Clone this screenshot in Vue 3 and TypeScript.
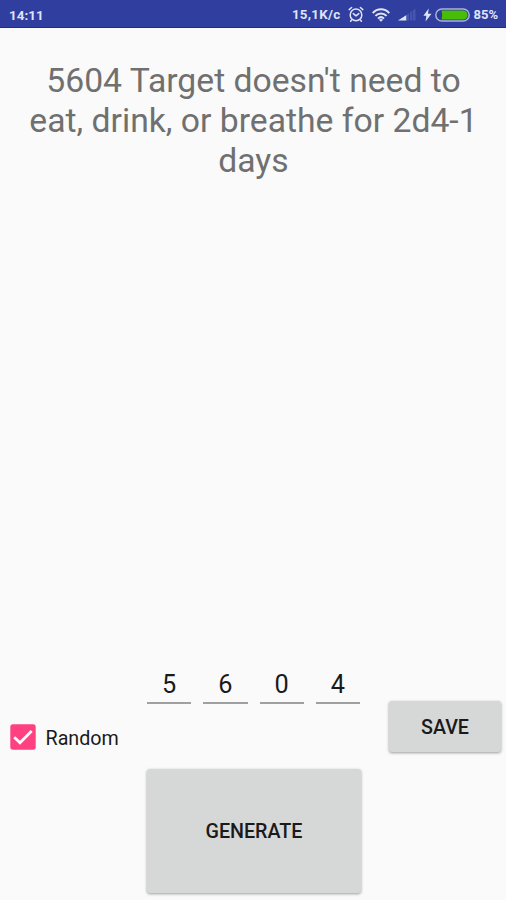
<script setup lang="ts">
import { computed, ref } from 'vue'

const effect = ref<string>("Target doesn't need to eat, drink, or breathe for 2d4-1 days")
const digits = ref<string[]>(['5', '6', '0', '4'])
const random = ref<boolean>(true)

const result = computed<string>(() => `${digits.value.join('')} ${effect.value}`)

function generate(): void {
  if (random.value) {
    digits.value = digits.value.map(() => String(Math.floor(Math.random() * 10)))
  }
}
</script>

<template>
  <div class="screen">
    <header class="status">
      <span class="clock">14:11</span>
      <span class="speed">15,1K/c</span>
      <svg class="alarm" width="16" height="17" viewBox="0 0 16 17" fill="none" stroke="currentColor" stroke-width="1.5" stroke-linecap="round" stroke-linejoin="round">
        <circle cx="8" cy="8.9" r="5.8" />
        <path d="M1.2 3.6 3.6 1.5M14.8 3.6 12.4 1.5M5.3 7.6 8 9.8 10.8 7.6M3.6 14l-1 1.3M12.4 14l1 1.3" />
      </svg>
      <svg class="wifi" width="18" height="14" viewBox="0 0 18 14" fill="none" stroke="currentColor" stroke-width="2">
        <path d="M.7 5.1C5.4.1 12.6.1 17.3 5.1M3.4 7.9c3.2-3.3 8-3.3 11.2 0M6 10.6c1.8-1.8 4.2-1.8 6 0" />
        <path d="M9 13.8 6.9 11.8c1.2-1 3-1 4.2 0Z" fill="currentColor" stroke="none" />
      </svg>
      <svg class="signal" width="18" height="13" viewBox="0 0 18 13">
        <path d="M0 12.5 8.5 7V12.5Z" fill="#dfe4f8" />
        <path d="M8.5 7 11 5.2V12.5H8.5ZM12 4.5l2.3-1.7v9.7H12ZM15 2.3 17.5.5v12H15Z" fill="#4655b0" />
      </svg>
      <svg class="bolt" width="9" height="14" viewBox="0 0 9 14">
        <path d="M5.7.5.4 7.7h3L2.5 13.5 8.5 5.8H5Z" fill="currentColor" />
      </svg>
      <svg class="battery" width="35" height="14" viewBox="0 0 35 14">
        <rect x=".8" y=".9" width="33.4" height="12.2" rx="6.1" fill="#2b3a94" stroke="#a9b2dc" stroke-width="1.5" />
        <path d="M6.5 2.4H28a4.6 4.6 0 0 1 0 9.2H6.5Q8 7 6.5 2.4Z" fill="#48bd08" />
      </svg>
      <span class="percent">85%</span>
    </header>

    <main class="content">
      <p class="result">{{ result }}</p>

      <section class="controls">
        <label class="random">
          <input v-model="random" class="native" type="checkbox" />
          <svg class="box" width="26" height="26" viewBox="0 0 26 26">
            <rect x=".3" y=".3" width="25.4" height="25.4" rx="2.6" :fill="random ? '#ff4081' : '#757575'" />
            <path v-if="random" d="M4.2 13.2 10 18.8 21.7 7" fill="none" stroke="#fafafa" stroke-width="2.8" />
          </svg>
          <span>Random</span>
        </label>

        <div class="middle">
          <div class="digits">
            <input v-for="(_, i) in digits" :key="i" v-model="digits[i]" class="digit" type="text" maxlength="1" />
          </div>
          <button class="button generate" type="button" @click="generate">GENERATE</button>
        </div>

        <button class="button save" type="button">SAVE</button>
      </section>
    </main>
  </div>
</template>

<style>
body {
  background: #fafafa;
}
</style>

<style scoped>
.screen {
  display: flex;
  flex-direction: column;
  width: 506px;
  height: 900px;
  overflow: hidden;
  box-sizing: border-box;
  background: #fafafa;
  color: #1a1a1a;
  font-family: Roboto, sans-serif;
}

.status {
  display: flex;
  align-items: center;
  flex: none;
  height: 28px;
  padding: 2px 8px 0 9px;
  box-sizing: border-box;
  border-bottom: 1px solid #1e2b94;
  background: #303f9f;
  color: #dfe4f8;
  font-size: 13px;
  font-weight: 700;
  white-space: nowrap;
}

.clock {
  margin-right: auto;
  font-size: 13.5px;
}

.speed {
  font-size: 13.3px;
  letter-spacing: 0.3px;
}

.alarm,
.wifi,
.signal {
  margin-left: 8px;
}

.bolt {
  margin-left: 7px;
}

.battery {
  margin: 0 3px 0 3px;
}

.content {
  display: flex;
  flex: 1;
  flex-direction: column;
  justify-content: space-between;
}

.result {
  margin: 0;
  padding: 33px 22px 0 23px;
  color: #707070;
  font-size: 33.7px;
  line-height: 40px;
  text-align: center;
}

.controls {
  display: grid;
  grid-template-columns: 109px 214px 113px;
  column-gap: 28px;
  padding: 0 4px 7px 10px;
  align-items: start;
}

.random {
  display: flex;
  align-items: center;
  gap: 9.5px;
  height: 26px;
  margin-top: 59px;
  font-size: 19.7px;
}

.random span {
  padding-top: 2px;
}

.native {
  position: absolute;
  opacity: 0;
}

.box {
  flex: none;
}

.digits {
  display: grid;
  grid-template-columns: repeat(4, 1fr);
  gap: 12px;
  margin: 0 1px 65px 0;
}

.digit {
  width: 100%;
  height: 39px;
  padding: 2px 0 0;
  box-sizing: border-box;
  border: 0;
  border-bottom: 2px solid #a0a0a0;
  border-radius: 0;
  background: none;
  color: #1a1a1a;
  font: 400 25.3px Roboto, sans-serif;
  text-align: center;
  outline: none;
}

.button {
  display: block;
  padding: 0;
  border: 0;
  border-radius: 3px;
  background: #d6d8d7;
  box-shadow: 0 1px 3px rgba(0, 0, 0, 0.38);
  color: #1a1a1a;
  font: 500 19.7px Roboto, sans-serif;
}

.generate {
  width: 214px;
  height: 124px;
}

.save {
  width: 112px;
  height: 51px;
  margin-top: 36px;
  padding-top: 2px;
}
</style>
